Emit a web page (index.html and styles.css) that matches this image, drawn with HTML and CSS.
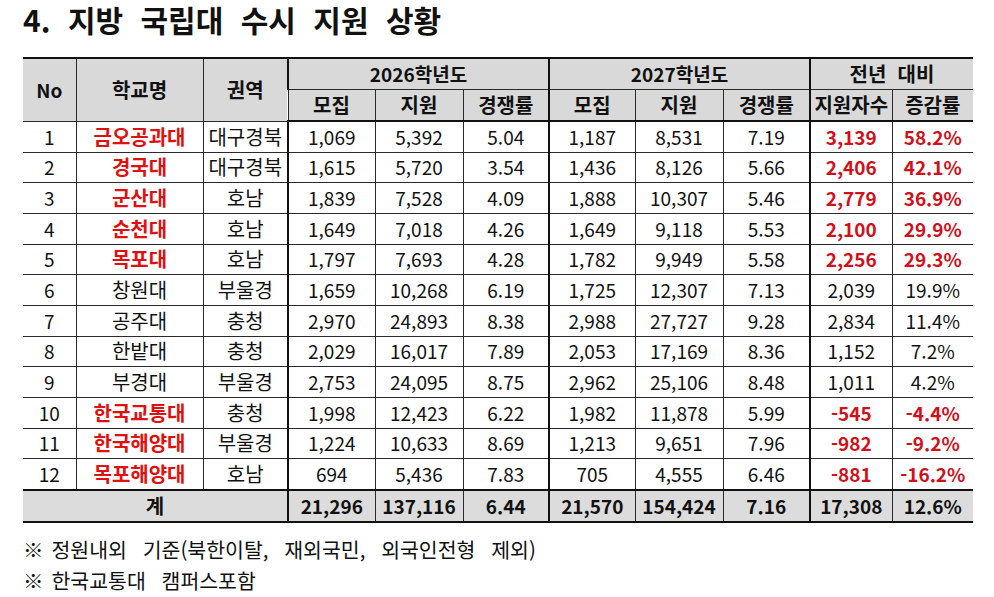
FILE: index.html
```html
<!DOCTYPE html>
<html lang="ko">
<head>
<meta charset="utf-8">
<link rel="stylesheet" href="styles.css">
</head>
<body>
<h1 class="title">4. 지방 국립대 수시 지원 상황</h1>
<table class="tbl">
  <colgroup>
    <col style="width:53px"><col style="width:127px"><col style="width:85px">
    <col style="width:87px"><col style="width:88px"><col style="width:86px">
    <col style="width:86px"><col style="width:88px"><col style="width:87px">
    <col style="width:82px"><col style="width:81px">
  </colgroup>
  <thead>
    <tr class="h1">
      <th rowspan="2">No</th>
      <th rowspan="2" class="ko">학교명</th>
      <th rowspan="2" class="ko">권역</th>
      <th colspan="3" class="g">2026학년도</th>
      <th colspan="3" class="g">2027학년도</th>
      <th colspan="2" class="g ko">전년&nbsp; 대비</th>
    </tr>
    <tr class="h2">
      <th class="g ko">모집</th><th class="ko">지원</th><th class="ko">경쟁률</th>
      <th class="g ko">모집</th><th class="ko">지원</th><th class="ko">경쟁률</th>
      <th class="g ko">지원자수</th><th class="ko">증감률</th>
    </tr>
  </thead>
  <tbody>
    <tr><td>1</td><td class="red ko">금오공과대</td><td class="ko">대구경북</td><td class="g">1,069</td><td>5,392</td><td>5.04</td><td class="g">1,187</td><td>8,531</td><td>7.19</td><td class="g red2">3,139</td><td class="red2">58.2%</td></tr>
    <tr><td>2</td><td class="red ko">경국대</td><td class="ko">대구경북</td><td class="g">1,615</td><td>5,720</td><td>3.54</td><td class="g">1,436</td><td>8,126</td><td>5.66</td><td class="g red2">2,406</td><td class="red2">42.1%</td></tr>
    <tr><td>3</td><td class="red ko">군산대</td><td class="ko">호남</td><td class="g">1,839</td><td>7,528</td><td>4.09</td><td class="g">1,888</td><td>10,307</td><td>5.46</td><td class="g red2">2,779</td><td class="red2">36.9%</td></tr>
    <tr><td>4</td><td class="red ko">순천대</td><td class="ko">호남</td><td class="g">1,649</td><td>7,018</td><td>4.26</td><td class="g">1,649</td><td>9,118</td><td>5.53</td><td class="g red2">2,100</td><td class="red2">29.9%</td></tr>
    <tr><td>5</td><td class="red ko">목포대</td><td class="ko">호남</td><td class="g">1,797</td><td>7,693</td><td>4.28</td><td class="g">1,782</td><td>9,949</td><td>5.58</td><td class="g red2">2,256</td><td class="red2">29.3%</td></tr>
    <tr><td>6</td><td class="ko">창원대</td><td class="ko">부울경</td><td class="g">1,659</td><td>10,268</td><td>6.19</td><td class="g">1,725</td><td>12,307</td><td>7.13</td><td class="g">2,039</td><td>19.9%</td></tr>
    <tr><td>7</td><td class="ko">공주대</td><td class="ko">충청</td><td class="g">2,970</td><td>24,893</td><td>8.38</td><td class="g">2,988</td><td>27,727</td><td>9.28</td><td class="g">2,834</td><td>11.4%</td></tr>
    <tr><td>8</td><td class="ko">한밭대</td><td class="ko">충청</td><td class="g">2,029</td><td>16,017</td><td>7.89</td><td class="g">2,053</td><td>17,169</td><td>8.36</td><td class="g">1,152</td><td>7.2%</td></tr>
    <tr><td>9</td><td class="ko">부경대</td><td class="ko">부울경</td><td class="g">2,753</td><td>24,095</td><td>8.75</td><td class="g">2,962</td><td>25,106</td><td>8.48</td><td class="g">1,011</td><td>4.2%</td></tr>
    <tr><td>10</td><td class="red ko">한국교통대</td><td class="ko">충청</td><td class="g">1,998</td><td>12,423</td><td>6.22</td><td class="g">1,982</td><td>11,878</td><td>5.99</td><td class="g red2">-545</td><td class="red2">-4.4%</td></tr>
    <tr><td>11</td><td class="red ko">한국해양대</td><td class="ko">부울경</td><td class="g">1,224</td><td>10,633</td><td>8.69</td><td class="g">1,213</td><td>9,651</td><td>7.96</td><td class="g red2">-982</td><td class="red2">-9.2%</td></tr>
    <tr><td>12</td><td class="red ko">목포해양대</td><td class="ko">호남</td><td class="g">694</td><td>5,436</td><td>7.83</td><td class="g">705</td><td>4,555</td><td>6.46</td><td class="g red2">-881</td><td class="red2">-16.2%</td></tr>
    <tr class="total"><td colspan="3" class="ko">계</td><td class="g">21,296</td><td>137,116</td><td>6.44</td><td class="g">21,570</td><td>154,424</td><td>7.16</td><td class="g">17,308</td><td>12.6%</td></tr>
  </tbody>
</table>
<p class="note"><span class="mark">※</span>정원내외 기준(북한이탈, 재외국민, 외국인전형 제외)</p>
<p class="note"><span class="mark">※</span>한국교통대 캠퍼스포함</p>
</body>
</html>
```
FILE: styles.css
```css
html, body {
  margin: 0;
  padding: 0;
  background: #ffffff;
}
body {
  padding-left: 23px;
  font-family: "Noto Sans CJK KR", "Noto Sans", sans-serif;
  color: #111111;
}
.title {
  margin: 0 0 17px 0;
  padding: 0;
  font-size: 30px;
  line-height: 40px;
  font-weight: 700;
  word-spacing: 9px;
  position: relative;
  top: -1px;
}
.tbl {
  border-collapse: collapse;
  table-layout: fixed;
  width: 950px;
  font-size: 19px;
}
.tbl th, .tbl td {
  border: 1px solid #2a2a2a;
  padding: 0;
  text-align: center;
  line-height: 24px;
  white-space: nowrap;
  overflow: hidden;
}
.tbl .ko { font-size: 20px; }
.tbl tr > :first-child { border-left: none; }
.tbl tr > :last-child { border-right: none; }
.tbl thead th {
  background: #d9d9d9;
  font-weight: 700;
}
.tbl .h1 th { border-top: 2px solid #111; height: 30px; }
.tbl .h2 th { border-bottom: 2px solid #111; height: 30px; }
.tbl tbody td { height: 29.67px; }
.tbl .g { border-left: 2px solid #111; }
.red { color: #e01010; font-weight: 700; }
.red2 { color: #d0101a; font-weight: 700; }
.tbl .total td {
  background: #dcdcdc;
  font-weight: 700;
  border-top: 2px solid #111;
  border-bottom: 2px solid #111;
  height: 30px;
}
.note {
  margin: 0;
  font-size: 20.5px;
  line-height: 31px;
  word-spacing: 10px;
}
.mark { margin-right: 8px; }
.note:first-of-type { margin-top: 11px; }
```
